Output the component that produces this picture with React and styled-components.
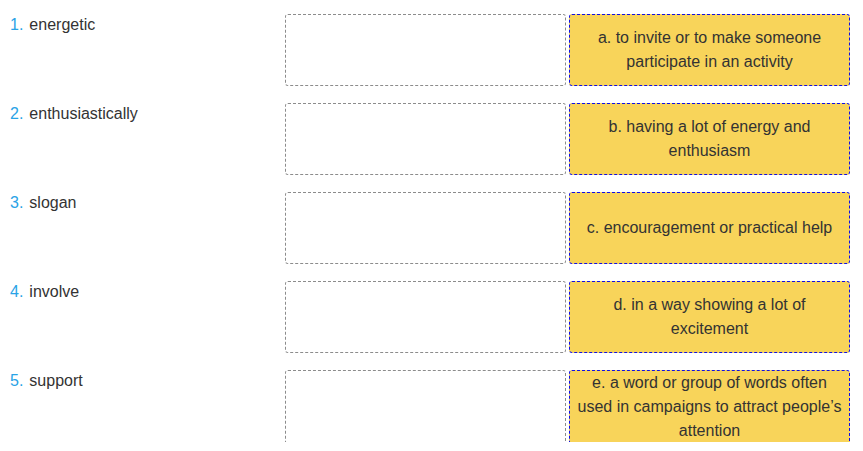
import React from "react";
import styled, { createGlobalStyle } from "styled-components";

const GlobalStyle = createGlobalStyle`
  body {
    margin: 0;
    background: #fff;
    font-family: "Liberation Sans", Arial, sans-serif;
    color: #333;
  }
`;

const Page = styled.div`
  display: flex;
  flex-direction: column;
  gap: 17px;
  padding: 14px 0 0 10px;
`;

const Row = styled.div`
  display: grid;
  grid-template-columns: 272px 281px 281px;
  column-gap: 3px;
  height: 72px;
`;

const Label = styled.div`
  display: flex;
  padding-top: 1px;
  font-size: 16px;
  line-height: 20px;
`;

const Num = styled.span`
  color: #29a3e6;
  margin-right: 6px;
`;

const DropZone = styled.div`
  box-sizing: border-box;
  border: 1px dashed #8c8c8c;
  border-radius: 3px;
  background: #fff;
`;

const Option = styled.div`
  box-sizing: border-box;
  display: flex;
  align-items: center;
  justify-content: center;
  text-align: center;
  padding: 0 4px;
  border: 1px dashed #1010e8;
  border-radius: 3px;
  background: #f8d45a;
  font-size: 16px;
  line-height: 24px;
  color: #333;
`;

const rows = [
  ["energetic", "a. to invite or to make someone participate in an activity"],
  ["enthusiastically", "b. having a lot of energy and enthusiasm"],
  ["slogan", "c. encouragement or practical help"],
  ["involve", "d. in a way showing a lot of excitement"],
  ["support", "e. a word or group of words often used in campaigns to attract people’s attention"],
];

export default function App() {
  return (
    <>
      <GlobalStyle />
      <Page>
        {rows.map(([word, def], i) => (
          <Row key={word}>
            <Label>
              <Num>{i + 1}.</Num>
              {word}
            </Label>
            <DropZone />
            <Option>{def}</Option>
          </Row>
        ))}
      </Page>
    </>
  );
}
